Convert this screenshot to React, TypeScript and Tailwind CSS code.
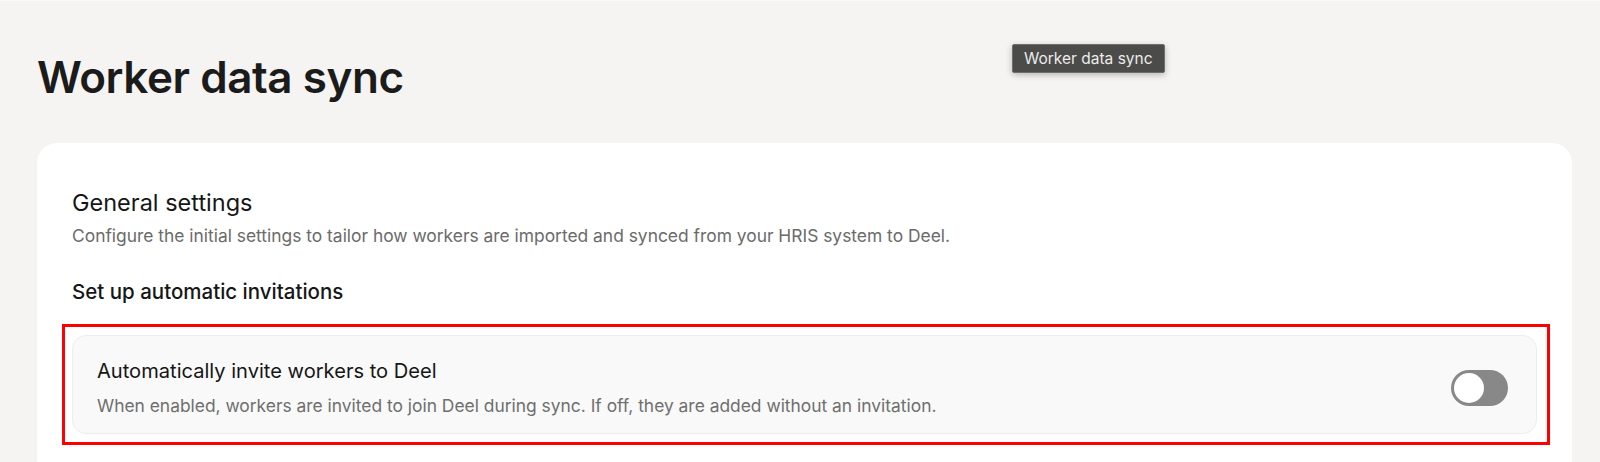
const font = { fontFamily: "Inter, 'Noto Sans', sans-serif" };

function Toggle() {
  return (
    <button
      type="button"
      role="switch"
      aria-checked={false}
      className="flex h-[36px] w-[57px] shrink-0 items-center rounded-full bg-[#888888] p-[3px]"
    >
      <span className="h-[30px] w-[30px] rounded-full bg-white" />
    </button>
  );
}

export default function App() {
  return (
    <div
      className="relative min-h-[462px] w-[1600px] overflow-hidden border-t border-[#fafafa] bg-[#f5f4f2] pl-[37px] pr-[28px]"
      style={font}
    >
      <h1 className="mt-[54px] text-[44px] font-semibold leading-[44px] tracking-[-0.01em] text-[#1b1b1b]">
        Worker data sync
      </h1>

      {/* hover tooltip captured in the shot */}
      <div className="absolute left-[1012px] top-[43px] rounded-[2px] border border-[#6e6e6c] bg-[#4b4b49] px-[11px] py-[3px] text-[15.5px] leading-[21px] text-[#ececec] shadow-[0_2px_6px_rgba(0,0,0,0.25)]">
        Worker data sync
      </div>

      <section className="mt-[44px] rounded-t-[20px] bg-white px-[35px] pb-[28px] pt-[45px]">
        <h2 className="text-[23.5px] leading-[30px] text-[#161616]">General settings</h2>
        <p className="mt-[5px] text-[17.4px] leading-[26px] text-[#6b6b6b]">
          Configure the initial settings to tailor how workers are imported and synced from your HRIS system to Deel.
        </p>
        <h3 className="mt-[29px] text-[20.5px] font-medium leading-[28px] text-[#161616]">
          Set up automatic invitations
        </h3>

        <div className="relative mt-[29px] flex items-center justify-between rounded-[14px] border border-[#ededed] bg-[#f9f9f9] pb-[14px] pl-[24px] pr-[28px] pt-[21px]">
          <div>
            <div className="text-[20.1px] leading-[28px] text-[#161616]">
              Automatically invite workers to Deel
            </div>
            <div className="mt-[8px] text-[17.4px] leading-[26px] text-[#6f6f6f]">
              When enabled, workers are invited to join Deel during sync. If off, they are added without an invitation.
            </div>
          </div>
          <Toggle />
          {/* red highlight frame */}
          <div className="pointer-events-none absolute -bottom-[12px] -left-[11px] -right-[14px] -top-[12px] border-[3px] border-[#ff0000]" />
        </div>
      </section>
    </div>
  );
}
